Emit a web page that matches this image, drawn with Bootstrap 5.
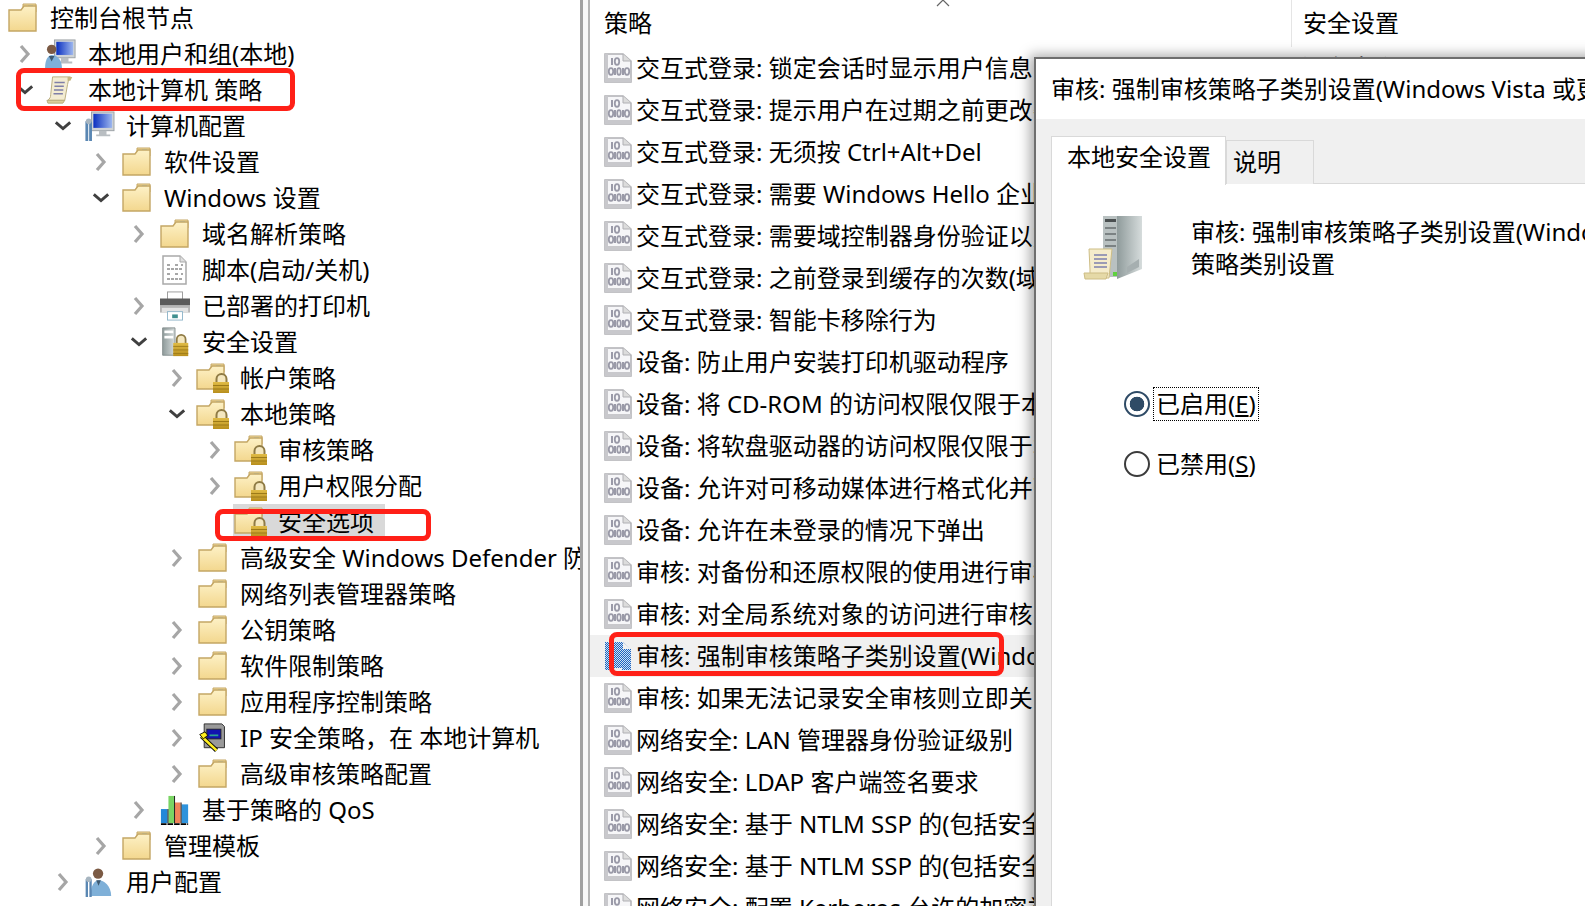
<!DOCTYPE html>
<html lang="zh-CN">
<head>
  <meta charset="UTF-8">
  <title>本地安全策略</title>
  <link href="https://cdn.jsdelivr.net/npm/bootstrap@5.3.0/dist/css/bootstrap.min.css" rel="stylesheet">
  <style>
    html, body { height: 100%; overflow: hidden; background: #fff; }
    body { font-family: "Noto Sans", "Noto Sans CJK SC", sans-serif; font-size: 24px; color: #000; line-height: 1.2; }
    .stage { width: 1585px; height: 906px; overflow: hidden; }

    /* tree */
    .tree-pane { width: 580px; flex: none; overflow: hidden; }
    .tree-row { height: 36px; white-space: nowrap; }
    .tree-sel { position: relative; }
    .tree-sel::before { content: ""; position: absolute; top: 0; bottom: 3px; left: 233px; width: 152px; background: #d9d9d9; }
    .tree-sel > * { position: relative; }
    .caret-box { width: 18px; margin-right: 10px; flex: none; display: flex; justify-content: center; }
    .tree-ico { width: 34px; height: 30px; flex: none; margin-right: 10px; }

    /* splitter */
    .split-bar { width: 10px; flex: none; background: #f7f7f7; border-left: 3px solid #a0a0a0; border-right: 2px solid #b4b4b4; }

    /* policy list */
    .list-pane { flex: 1; min-width: 0; overflow: hidden; position: relative; }
    .list-head { height: 47px; }
    .col-name { width: 701px; flex: none; padding-left: 14px; overflow: hidden; white-space: nowrap; }
    .col-val { flex: 1; padding-left: 11px; white-space: nowrap; }
    .list-head .col-val { border-left: 1px solid #e5e5e5; }
    .sort-caret { position: absolute; left: 345px; top: 0; }
    .list-row { height: 42px; }
    .list-row.is-sel { background: #f0f0f0; }
    .pol-ico { width: 28px; height: 30px; flex: none; margin-right: 4px; }

    /* dialog */
    .prop-dlg { position: absolute; left: 1034px; top: 57px; width: 900px; height: 900px; background: #f0f0f0; border: 2px solid #6e6e6e; border-right: 0; border-bottom: 0; box-shadow: -4px -2px 12px rgba(0,0,0,.35); }
    .dlg-title { height: 60px; background: #fff; padding-left: 15px; white-space: nowrap; }
    .dlg-body { padding: 17px 0 0 15px; }
    .dlg-tabs { border-bottom: 1px solid #d9d9d9; height: 48px; align-items: flex-end; }
    .dlg-tabs .nav-link { color: #000; border: 1px solid #d9d9d9; border-bottom: 0; border-radius: 0; margin: 0; background: #f0f0f0; height: 44px; padding: 7px 32px 0 6px; }
    .dlg-tabs .nav-link.active { height: 49px; margin-bottom: -1px; background: #fff; color: #000; padding: 6px 14px 0 15px; border-color: #d9d9d9; }
    .dlg-panel { background: #fff; border-left: 1px solid #d9d9d9; height: 900px; padding: 31px 0 0 31px; }
    .srv-ico { width: 62px; height: 66px; flex: none; margin-right: 46px; }
    .dlg-heading { width: 738px; line-height: 32px; margin-top: 1px; }
    .radio-box { margin: 106px 0 0 41px; }
    .radio-line { height: 34px; margin-bottom: 26px; padding: 0; }
    .radio-line .form-check-input { width: 26px; height: 26px; margin: 0 3px 0 0; flex: none; float: none; border: 2px solid #3c3c3c; box-shadow: none; }
    .radio-line .form-check-input:checked { background-color: #fff; border-color: #2f4b66; background-image: radial-gradient(circle, #2f4b66 0 7px, transparent 7.6px); }
    .radio-line .form-check-label { padding: 0 2px; line-height: 32px; border: 1px dotted transparent; }
    .radio-line .has-focus { border-color: #000; }

    /* red marks from the screenshot's author */
    .red-mark { position: absolute; border: 5px solid #ff2017; border-radius: 8px; pointer-events: none; }
    .mark-a { left: 16px; top: 68px; width: 279px; height: 43px; }
    .mark-b { left: 215px; top: 509px; width: 216px; height: 32px; }
    .mark-c { left: 609px; top: 632px; width: 395px; height: 44px; }
  </style>
</head>
<body>
  <svg width="0" height="0" class="d-block position-absolute">
    <defs>
      <linearGradient id="gFolder" x1="0" y1="0" x2="0" y2="1"><stop offset="0" stop-color="#fdf1c6"/><stop offset="1" stop-color="#f3d78e"/></linearGradient>
      <linearGradient id="gLock" x1="0" y1="0" x2="0" y2="1"><stop offset="0" stop-color="#e0bb45"/><stop offset="1" stop-color="#b88f1e"/></linearGradient>
      <linearGradient id="gScreen" x1="0" y1="0" x2="1" y2="0"><stop offset="0" stop-color="#0a2fc0"/><stop offset="1" stop-color="#9db7ee"/></linearGradient>
      <linearGradient id="gTower" x1="0" y1="0" x2="1" y2="0"><stop offset="0" stop-color="#8f9b9b"/><stop offset="1" stop-color="#d6dcdc"/></linearGradient>
      <pattern id="pDither" width="2" height="2" patternUnits="userSpaceOnUse"><rect width="2" height="2" fill="#cfe2f5"/><rect width="1" height="1" fill="#1f63bd"/><rect x="1" y="1" width="1" height="1" fill="#1f63bd"/></pattern>

      <symbol id="i-folder" viewBox="0 0 30 30">
        <path d="M15 1h13v8H15z" fill="#f5dfa0" stroke="#c4a664"/>
        <rect x="20" y="2.5" width="5" height="2" fill="#6cb4ea"/>
        <path d="M1 7h12l3-4h12v25H1z" fill="url(#gFolder)" stroke="#c4a664" stroke-width="1.4"/>
      </symbol>
      <symbol id="i-lockfolder" viewBox="0 0 34 30">
        <path d="M15 1h13v8H15z" fill="#f5dfa0" stroke="#c4a664"/>
        <rect x="20" y="2.5" width="5" height="2" fill="#6cb4ea"/>
        <path d="M1 7h12l3-4h12v23H1z" fill="url(#gFolder)" stroke="#c4a664" stroke-width="1.4"/>
        <path d="M20.5 20v-4a5 5 0 0 1 10 0v4" fill="#f4e7bf" stroke="#8f7b45" stroke-width="2"/>
        <rect x="17" y="19" width="16" height="11" fill="url(#gLock)"/>
        <path d="M17 22.5h16M17 26h16" stroke="#9c7a18"/>
      </symbol>
      <symbol id="i-userpc" viewBox="0 0 34 32">
        <rect x="10" y="1" width="22" height="19" fill="#cfd3d6" stroke="#9aa0a4"/>
        <rect x="12" y="3" width="18" height="14" fill="url(#gScreen)"/>
        <path d="M17 20h8v4h4v2H14v-2h3z" fill="#b9bec2"/>
        <circle cx="7" cy="11" r="5" fill="#7b5a44"/>
        <path d="M0 31c0-10 4-14 7-14 6 0 11 5 11 14z" fill="#7fb0d8"/>
        <path d="M4 18h6l-3 6z" fill="#3e5970"/>
      </symbol>
      <symbol id="i-scroll" viewBox="0 0 32 32">
        <path d="M7 2h19c-2 2-2 4-3 8l-3 17H2c2-2 3-3 3-6z" fill="#f3ecd2" stroke="#b8ab7c"/>
        <path d="M9 8h11M9 12h10M8.500 16h10M8 20h10" stroke="#7f7fa8" stroke-width="1.600"/>
        <path d="M1 27h19l-2 3H2z" fill="#dbcf9c" stroke="#b8ab7c"/>
        <path d="M23 2h5l-2 4h-3z" fill="#c6b67e"/>
      </symbol>
      <symbol id="i-config" viewBox="0 0 34 32">
        <rect x="9" y="1" width="24" height="20" fill="#cfd3d6" stroke="#9aa0a4"/>
        <rect x="11" y="3" width="20" height="15" fill="url(#gScreen)"/>
        <path d="M17 21h8v4h4v2H14v-2h3z" fill="#b9bec2"/>
        <path d="M4 11v21M8 11v21" stroke="#5a87b3" stroke-width="3"/>
        <circle cx="6" cy="11" r="3" fill="#a7b5c0"/>
      </symbol>
      <symbol id="i-script" viewBox="0 0 30 30">
        <path d="M3 1h17l6 6v22H3z" fill="#fff" stroke="#a9a9a9" stroke-width="1.500"/>
        <path d="M20 1v6h6" fill="#dfdfdf" stroke="#a9a9a9"/>
        <path d="M7 10h4M15 10h4M21 10h2M7 14h16M7 19h4M15 19h4M21 19h2M7 24h16" stroke="#8a8a8a" stroke-width="1.400" stroke-dasharray="3 1"/>
      </symbol>
      <symbol id="i-printer" viewBox="0 0 34 32">
        <rect x="9" y="1" width="16" height="8" fill="#fff" stroke="#9a9a9a"/>
        <path d="M1 10h32v13H1z" fill="#b6b6b6"/>
        <rect x="1" y="8" width="32" height="7" fill="#5b5b5b"/>
        <rect x="3" y="18" width="28" height="5" fill="#e3e3e3"/>
        <rect x="9" y="22" width="16" height="9" fill="#fff" stroke="#8fb5c9"/>
        <rect x="14" y="25" width="6" height="4" fill="#3f8f8f"/>
      </symbol>
      <symbol id="i-secsrv" viewBox="0 0 32 34">
        <path d="M2 1h14v31H2z" fill="url(#gTower)" stroke="#7f8a8a"/>
        <rect x="4" y="4" width="10" height="3" fill="#fff"/><rect x="4" y="10" width="10" height="3" fill="#fff"/>
        <path d="M18 18v-4a5 5 0 0 1 10 0v4" fill="#f4e7bf" stroke="#8f7b45" stroke-width="2"/>
        <rect x="14" y="18" width="17" height="15" fill="url(#gLock)"/>
        <path d="M14 22h17M14 26h17M14 30h17" stroke="#9c7a18"/>
      </symbol>
      <symbol id="i-ipsec" viewBox="0 0 32 34">
        <path d="M6 1h20l3 3v24H6z" fill="#9a9a9a" stroke="#222"/>
        <rect x="9" y="7" width="16" height="11" fill="#1212b0" stroke="#222"/>
        <rect x="12" y="13" width="10" height="2" fill="#2da08f"/>
        <path d="M3 15l17 16" stroke="#000" stroke-width="5"/>
        <path d="M3 15l17 16" stroke="#ffef20" stroke-width="3"/>
        <path d="M1 13l6-3 3 4-5 4z" fill="#ffef20" stroke="#000"/>
      </symbol>
      <symbol id="i-qos" viewBox="0 0 32 32">
        <rect x="1" y="15" width="7" height="15" fill="#2488d8"/><rect x="9" y="1" width="6" height="29" fill="#79d463"/>
        <rect x="16" y="8" width="6" height="22" fill="#f0845a"/><rect x="23" y="10" width="7" height="20" fill="#2f93dc"/>
        <path d="M1 31h29" stroke="#000" stroke-width="2" stroke-dasharray="6 1"/>
        <path d="M8.500 15v15M15.500 1v29M22.500 8v22" stroke="#111"/>
      </symbol>
      <symbol id="i-userconf" viewBox="0 0 32 32">
        <circle cx="15" cy="7" r="5.500" fill="#7b5a44"/>
        <path d="M7 31c0-11 4-17 9-17s13 6 13 17z" fill="#7fb0d8"/>
        <path d="M3 13v19M7 13v19" stroke="#5a87b3" stroke-width="2.500"/>
        <circle cx="5" cy="13" r="3" fill="#a7b5c0"/>
        <path d="M13 14h5l-2.500 6z" fill="#3e5970"/>
      </symbol>
      <symbol id="i-policy" viewBox="0 0 28 30">
        <path d="M1 1h18l8 7v21H1z" fill="#f6f6f8" stroke="#b0b0b4" stroke-width="1.500"/>
        <path d="M19 1v7h8" fill="#dcdcdc" stroke="#b0b0b4"/>
        <path d="M1 1h3v28H1zM1 25h26v4H1z" fill="#c8c8cc"/>
        <path d="M8 5v7M19 15v7M11 15v7" stroke="#9a9aa8" stroke-width="2"/>
        <ellipse cx="13" cy="8.500" rx="2.200" ry="3.300" fill="none" stroke="#9a9aa8" stroke-width="1.800"/>
        <ellipse cx="7" cy="18.500" rx="2.200" ry="3.300" fill="none" stroke="#9a9aa8" stroke-width="1.800"/>
        <ellipse cx="15" cy="18.500" rx="1.800" ry="3.300" fill="none" stroke="#9a9aa8" stroke-width="1.800"/>
        <ellipse cx="23" cy="18.500" rx="2.200" ry="3.300" fill="none" stroke="#9a9aa8" stroke-width="1.800"/>
      </symbol>
      <symbol id="i-policy-sel" viewBox="0 0 28 30">
        <path d="M1 1h18l8 7v21H1z" fill="url(#pDither)"/>
        <path d="M19 1v7h8" fill="#f0f0f0"/>
        <path d="M9 27h9v3H9z" fill="#f0f0f0"/>
      </symbol>
      <symbol id="i-server" viewBox="0 0 62 66">
        <path d="M20 1h14v61H20z" fill="#b9c1c1"/>
        <path d="M34 1h25v53l-25 10z" fill="url(#gTower)"/>
        <rect x="22" y="4" width="11" height="3" fill="#4a4f50"/><path d="M22 13h11M22 19h11M22 25h11M22 31h11" stroke="#7b8283" stroke-width="2"/>
        <rect x="30" y="57" width="4" height="4" fill="#5fd13f"/>
        <path d="M6 34h23l-3 29H5c2-2 2-4 2-8z" fill="#f5eccb" stroke="#cdbd85"/>
        <path d="M11 40h13M11 44h13M11 48h13M11 52h13" stroke="#9b9bb5" stroke-width="1.800"/>
        <path d="M1 58h24l-2 6H2z" fill="#e5d9a7" stroke="#cdbd85"/>
        <path d="M44 58l12-6v-8l-12 8z" fill="#a6afb0"/>
      </symbol>
    </defs>
  </svg>

  <div class="stage d-flex position-relative">
    <div class="tree-pane" id="tree"></div>
    <div class="split-bar"></div>
    <div class="list-pane">
      <div class="list-head d-flex align-items-center position-relative">
        <div class="col-name">策略</div>
        <svg class="sort-caret" width="16" height="8" viewBox="0 0 16 8"><path d="M2 6l6-6 6 6" fill="none" stroke="#666" stroke-width="1.200"/></svg>
        <div class="col-val align-self-stretch d-flex align-items-center">安全设置</div>
      </div>
      <div id="policies"></div>
    </div>

    <div class="prop-dlg">
      <div class="dlg-title d-flex align-items-center">审核: 强制审核策略子类别设置(Windows Vista 或更高版本)替代审核策略类别设置 属性</div>
      <div class="dlg-body">
        <ul class="nav dlg-tabs">
          <li class="nav-item"><a class="nav-link active" href="#">本地安全设置</a></li>
          <li class="nav-item"><a class="nav-link" href="#">说明</a></li>
        </ul>
        <div class="dlg-panel">
          <div class="d-flex">
            <svg class="srv-ico"><use href="#i-server"/></svg>
            <div class="dlg-heading">审核: 强制审核策略子类别设置(Windows Vista 或更高版本)替代审核策略类别设置</div>
          </div>
          <div class="radio-box">
            <div class="form-check radio-line d-flex align-items-center">
              <input class="form-check-input" type="radio" name="auditSub" id="auditOn" checked>
              <label class="form-check-label has-focus" for="auditOn">已启用(<u>E</u>)</label>
            </div>
            <div class="form-check radio-line d-flex align-items-center">
              <input class="form-check-input" type="radio" name="auditSub" id="auditOff">
              <label class="form-check-label" for="auditOff">已禁用(<u>S</u>)</label>
            </div>
          </div>
        </div>
      </div>
    </div>

    <div class="red-mark mark-a"></div>
    <div class="red-mark mark-b"></div>
    <div class="red-mark mark-c"></div>
  </div>

  <script src="https://cdn.jsdelivr.net/npm/bootstrap@5.3.0/dist/js/bootstrap.bundle.min.js"></script>
  <script>
    // level, caret (r = right, d = down, blank = none), icon, label
    const treeData = [
      [0, "", "folder", "控制台根节点"],
      [1, "r", "userpc", "本地用户和组(本地)"],
      [1, "d", "scroll", "本地计算机 策略"],
      [2, "d", "config", "计算机配置"],
      [3, "r", "folder", "软件设置"],
      [3, "d", "folder", "Windows 设置"],
      [4, "r", "folder", "域名解析策略"],
      [4, "", "script", "脚本(启动/关机)"],
      [4, "r", "printer", "已部署的打印机"],
      [4, "d", "secsrv", "安全设置"],
      [5, "r", "lockfolder", "帐户策略"],
      [5, "d", "lockfolder", "本地策略"],
      [6, "r", "lockfolder", "审核策略"],
      [6, "r", "lockfolder", "用户权限分配"],
      [6, "", "lockfolder", "安全选项", true],
      [5, "r", "folder", "高级安全 Windows Defender 防火墙"],
      [5, "", "folder", "网络列表管理器策略"],
      [5, "r", "folder", "公钥策略"],
      [5, "r", "folder", "软件限制策略"],
      [5, "r", "folder", "应用程序控制策略"],
      [5, "r", "ipsec", "IP 安全策略，在 本地计算机"],
      [5, "r", "folder", "高级审核策略配置"],
      [4, "r", "qos", "基于策略的 QoS"],
      [3, "r", "folder", "管理模板"],
      [2, "r", "userconf", "用户配置"]
    ];

    const policies = [
      "交互式登录: 锁定会话时显示用户信息",
      "交互式登录: 提示用户在过期之前更改密码",
      "交互式登录: 无须按 Ctrl+Alt+Del",
      "交互式登录: 需要 Windows Hello 企业版或智能卡",
      "交互式登录: 需要域控制器身份验证以对工作站进行解锁",
      "交互式登录: 之前登录到缓存的次数(域控制器不可用时)",
      "交互式登录: 智能卡移除行为",
      "设备: 防止用户安装打印机驱动程序",
      "设备: 将 CD-ROM 的访问权限仅限于本地登录用户",
      "设备: 将软盘驱动器的访问权限仅限于本地登录用户",
      "设备: 允许对可移动媒体进行格式化并弹出",
      "设备: 允许在未登录的情况下弹出",
      "审核: 对备份和还原权限的使用进行审核",
      "审核: 对全局系统对象的访问进行审核",
      "审核: 强制审核策略子类别设置(Windows Vista 或更高版本)替代审核策略类别设置",
      "审核: 如果无法记录安全审核则立即关闭系统",
      "网络安全: LAN 管理器身份验证级别",
      "网络安全: LDAP 客户端签名要求",
      "网络安全: 基于 NTLM SSP 的(包括安全 RPC)服务器的最小会话安全",
      "网络安全: 基于 NTLM SSP 的(包括安全 RPC)客户端的最小会话安全",
      "网络安全: 配置 Kerberos 允许的加密类型"
    ];
    const SELECTED = 14;

    const caretSvg = {
      r: '<svg width="12" height="20" viewBox="0 0 12 20"><path d="M2 2l7 8-7 8" fill="none" stroke="#a6a6a6" stroke-width="3.200"/></svg>',
      d: '<svg width="20" height="12" viewBox="0 0 20 12"><path d="M2 2l8 7 8-7" fill="none" stroke="#404040" stroke-width="3.200"/></svg>'
    };

    document.getElementById("tree").innerHTML = treeData.map(([lvl, caret, icon, label, sel]) => {
      const left = lvl === 0 ? 6 : 38 * lvl - 22;
      const box = lvl === 0 ? "" : `<span class="caret-box">${caretSvg[caret] || ""}</span>`;
      return `<div class="tree-row d-flex align-items-center ${sel ? "tree-sel" : ""}" style="padding-left:${left}px">
        ${box}<svg class="tree-ico"><use href="#i-${icon}"/></svg><span>${label}</span></div>`;
    }).join("");

    document.getElementById("policies").innerHTML = policies.map((text, i) => {
      const icon = i === SELECTED ? "policy-sel" : "policy";
      return `<div class="list-row d-flex align-items-center ${i === SELECTED ? "is-sel" : ""}">
        <div class="col-name d-flex align-items-center"><svg class="pol-ico"><use href="#i-${icon}"/></svg><span>${text}</span></div>
        <div class="col-val">没有定义</div></div>`;
    }).join("");
  </script>
</body>
</html>
